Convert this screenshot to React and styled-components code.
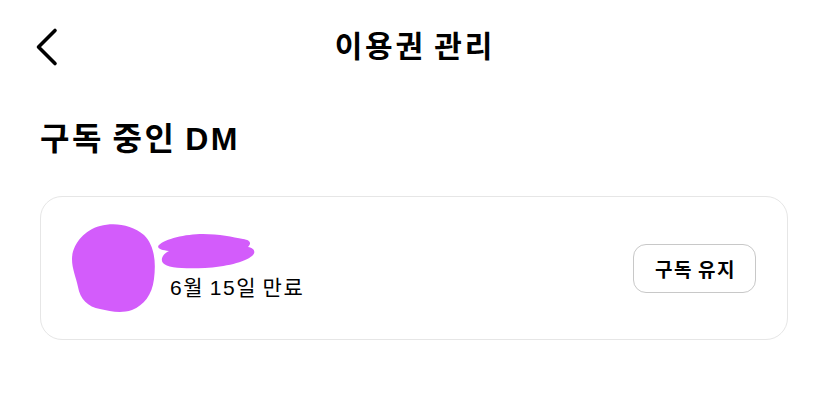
import React from "react";
import styled, { createGlobalStyle } from "styled-components";

const Global = createGlobalStyle`
  html, body { margin: 0; padding: 0; background: #ffffff; }
  body { font-family: "Liberation Sans", "Noto Sans CJK KR", "Noto Sans", sans-serif; color: #000; }
`;

const Page = styled.div`
  width: 828px;
  height: 395px;
  background: #fff;
  overflow: hidden;
`;

const Header = styled.header`
  height: 94px;
  display: grid;
  grid-template-columns: 1fr auto 1fr;
  align-items: center;
  padding: 0 33px;
  box-sizing: border-box;
`;

const BackButton = styled.button`
  justify-self: start;
  width: 28px;
  height: 40px;
  padding: 0;
  border: none;
  background: none;
  display: flex;
  align-items: center;
`;

const Title = styled.h1`
  margin: 0;
  font-size: 30px;
  font-weight: 700;
  line-height: 36px;
  letter-spacing: 2.9px;
  word-spacing: -3px;
  padding-left: 2px;
`;

const SectionTitle = styled.h2`
  margin: 27px 0 0 40px;
  font-size: 32px;
  font-weight: 700;
  line-height: 36px;
  letter-spacing: 2.6px;
  word-spacing: -3px;
`;

const Card = styled.div`
  margin: 39px 40px 0;
  height: 144px;
  box-sizing: border-box;
  border: 1px solid #e6e6e6;
  border-radius: 22px;
  display: flex;
  align-items: center;
  padding: 0 31px 0 29px;
`;

const Avatar = styled.svg`
  width: 86px;
  height: 90px;
  flex-shrink: 0;
`;

const Info = styled.div`
  display: flex;
  flex-direction: column;
  margin-left: 1px;
  margin-top: -4px;
  flex: 1;
`;

const NameScribble = styled.svg`
  width: 100px;
  height: 38px;
`;

const Expiry = styled.span`
  margin-left: 13px;
  margin-top: 5px;
  font-size: 21px;
  line-height: 26px;
  font-weight: 400;
  letter-spacing: 1.6px;
  word-spacing: -2px;
`;

const KeepButton = styled.button`
  width: 123px;
  height: 49px;
  box-sizing: border-box;
  border: 1.5px solid #c8c8c8;
  border-radius: 13px;
  background: #fff;
  font-family: inherit;
  font-size: 19px;
  font-weight: 700;
  color: #000;
  letter-spacing: 1.6px;
  word-spacing: -2px;
  padding: 0 0 0 2px;
  margin-top: 1px;
`;

const PURPLE = "#d35cfb";

export default function App() {
  return (
    <Page>
      <Global />
      <Header>
        <BackButton aria-label="뒤로">
          <svg width="28" height="40" viewBox="0 0 28 40">
            <path d="M22 3.5 L5.5 20 L22 36.5" fill="none" stroke="#000" strokeWidth="3.6" strokeLinecap="round" strokeLinejoin="round" />
          </svg>
        </BackButton>
        <Title>이용권 관리</Title>
        <div />
      </Header>
      <SectionTitle>구독 중인 DM</SectionTitle>
      <Card>
        <Avatar viewBox="0 0 86 90">
          <path
            fill={PURPLE}
            d="M30 3 C45 -1 62 2 74 12 C85 23 86 40 84 56 C82 72 74 82 62 87 C50 91 40 88 30 86 C18 84 10 76 8 64 C6 54 2 46 2 36 C2 22 14 7 30 3 Z"
          />
        </Avatar>
        <Info>
          <NameScribble viewBox="0 0 100 38">
            <path
              fill={PURPLE}
              d="M2 13 C8 7 28 2 46 2 C62 2 76 5 86 7 C93 8 95 11 91 15 C98 16 99 21 95 24 C88 30 68 35 48 36 C28 37 10 36 6 31 C3 27 6 22 12 19 C4 18 -1 16 2 13 Z"
            />
          </NameScribble>
          <Expiry>6월 15일 만료</Expiry>
        </Info>
        <KeepButton>구독 유지</KeepButton>
      </Card>
    </Page>
  );
}
